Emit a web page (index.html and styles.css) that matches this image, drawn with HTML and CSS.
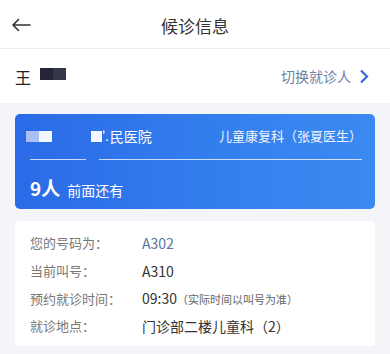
FILE: index.html
```html
<!DOCTYPE html>
<html lang="zh-CN">
<head>
<meta charset="utf-8">
<title>候诊信息</title>
<link rel="stylesheet" href="styles.css">
</head>
<body>
<header class="topbar">
  <div class="back">
    <svg width="20" height="14" viewBox="0 0 20 14"><path d="M19 7H2M7.5 1.5L2 7l5.5 5.5" fill="none" stroke="#333" stroke-width="1.6" stroke-linecap="round" stroke-linejoin="round"/></svg>
  </div>
  <h1 class="title">候诊信息</h1>
  <div></div>
</header>
<section class="patient">
  <div class="name">王<span class="mask"><i class="m1"></i><i class="m2"></i></span></div>
  <div class="switch">切换就诊人
    <svg width="10" height="15" viewBox="0 0 10 15"><path d="M2 1.5l6 6-6 6" fill="none" stroke="#3a6ad8" stroke-width="2.2" stroke-linejoin="miter"/></svg>
  </div>
</section>
<main class="content">
  <div class="queue-card">
    <div class="qc-grid">
      <div class="qc-left"><span class="blk b1"></span><span class="blk b2"></span></div>
      <div class="qc-right">
        <div class="hosp"><span class="blk b3"></span><span class="frag">'.</span>民医院</div>
        <div class="dept">儿童康复科（张夏医生）</div>
      </div>
      <div class="line l1"></div>
      <div class="line l2"></div>
    </div>
    <div class="ahead"><b>9人</b><span>前面还有</span></div>
  </div>
  <div class="info-card">
    <div class="row"><span class="lbl">您的号码为：</span><span class="val num">A302</span></div>
    <div class="row"><span class="lbl">当前叫号：</span><span class="val">A310</span></div>
    <div class="row"><span class="lbl">预约就诊时间：</span><span class="val">09:30<small>（实际时间以叫号为准）</small></span></div>
    <div class="row"><span class="lbl">就诊地点：</span><span class="val">门诊部二楼儿童科（2）</span></div>
  </div>
</main>
</body>
</html>
```

FILE: styles.css
```css
* { box-sizing: border-box; margin: 0; padding: 0; }
body {
  background: #f4f5f9;
  font-family: "Noto Sans CJK SC", "Noto Sans", sans-serif;
  color: #333;
  width: 390px;
}
.topbar {
  height: 49px;
  background: #fff;
  border-bottom: 1px solid #ececec;
  display: grid;
  grid-template-columns: 60px 1fr 60px;
  align-items: center;
}
.back { padding-left: 11px; display: flex; align-items: center; padding-top: 2px; }
.title {
  text-align: center;
  font-size: 17px;
  font-weight: 400;
  color: #333;
  line-height: 1;
  padding-top: 2px;
}
.patient {
  height: 54px;
  background: #fff;
  display: flex;
  align-items: center;
  justify-content: space-between;
  padding: 0 21px 0 15px;
}
.name {
  font-size: 16px;
  display: flex;
  align-items: center;
  color: #222;
  padding-top: 2px;
}
.mask { display: flex; margin-left: 9px; margin-top: -7px; }
.mask i { display: block; width: 13px; height: 12px; }
.m1 { background: #252536; }
.m2 { background: #34364a; }
.switch {
  font-size: 14px;
  color: #6d82a6;
  display: flex;
  align-items: center;
  gap: 8px;
}
.content { padding: 11px 15px 0; }
.queue-card {
  height: 95px;
  border-radius: 5px;
  background: linear-gradient(90deg, #2b6ae7 0%, #3480ee 60%, #3d89f2 100%);
  color: #fff;
  padding: 14px 13px 0 11px;
}
.qc-grid {
  display: grid;
  grid-template-columns: 65px 1fr;
  row-gap: 15px;
}
.qc-left { display: flex; height: 16px; align-items: center; }
.blk { display: inline-block; height: 11px; }
.b1 { width: 13px; background: #aac0f5; }
.b2 { width: 13px; background: #f2f6ff; }
.qc-right {
  display: flex;
  justify-content: space-between;
  align-items: center;
  height: 16px;
}
.hosp { font-size: 14px; line-height: 16px; display: flex; align-items: center; }
.b3 { width: 11px; background: #f4f7ff; }
.frag { font-size: 12px; margin-right: 1px; }
.dept { font-size: 13px; line-height: 16px; color: #eef4ff; }
.line { height: 1px; background: rgba(255,255,255,0.75); }
.l1 { margin: 0 5px 0 4px; }
.l2 { margin: 0 0 0 8px; }
.ahead { display: flex; align-items: baseline; margin-top: 14px; padding-left: 4px; height: 26px; }
.ahead b { font-size: 19px; font-weight: 700; }
.ahead span { font-size: 14px; margin-left: 7px; }
.info-card {
  margin-top: 12px;
  background: #fff;
  border-radius: 4px;
  padding: 8px 15px 6px;
}
.row {
  display: grid;
  grid-template-columns: 112px 1fr;
  height: 27.7px;
  align-items: center;
}
.lbl { font-size: 13px; color: #777; }
.val { font-size: 14px; color: #333; }
.val.num { color: #5a74a3; }
.val small { font-size: 11px; color: #666; }
```
